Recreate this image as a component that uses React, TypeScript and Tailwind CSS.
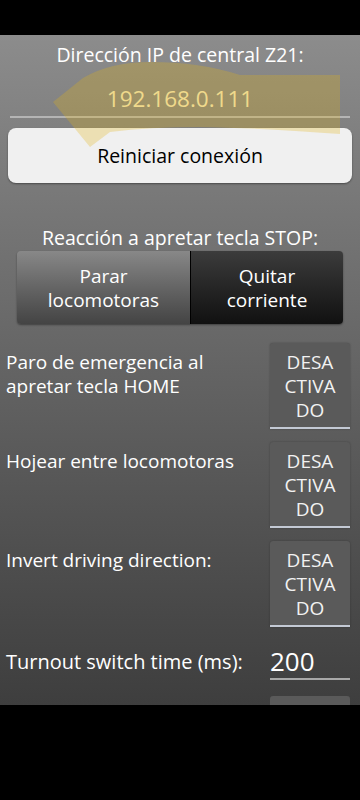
import React from "react";

const font = { fontFamily: '"Open Sans", "Noto Sans", sans-serif' };

function ToggleBox({ text }: { text: string[] }): React.JSX.Element {
  return (
    <div className="flex w-[80px] shrink-0 flex-col items-center rounded-t-[3px] border-b-2 border-[#c3c9d4] bg-[#5a5a5a] pt-[7px] pb-[5px] shadow-[0_0_2px_rgba(0,0,0,0.3)]">
      {text.map((t) => (
        <span key={t} className="text-[19px] leading-[24px] text-[#f2f2f2]">
          {t}
        </span>
      ))}
    </div>
  );
}

function SettingRow({ label }: { label: string[] }): React.JSX.Element {
  return (
    <div className="flex items-start justify-between pl-[6px] pr-[10px]">
      <div className="pt-[7px] text-[19px] leading-[24px] text-white">
        {label.map((l) => (
          <div key={l}>{l}</div>
        ))}
      </div>
      <ToggleBox text={["DESA", "CTIVA", "DO"]} />
    </div>
  );
}

export default function App(): React.JSX.Element {
  return (
    <div className="flex h-[800px] w-[360px] flex-col bg-black" style={font}>
      <div className="h-[35px] shrink-0 bg-black" />

      {/* Settings panel */}
      <div className="relative h-[670px] shrink-0 overflow-hidden bg-gradient-to-b from-[#8c8c8c] to-[#3e3e3e]">
        <div className="pt-[8px] text-center text-[19.5px] leading-[24px] text-white">
          Dirección IP de central Z21:
        </div>
        <div className="mx-[10px] mt-[17px] border-b-2 border-[#b4b4b4] pb-[2px] text-center text-[22.5px] leading-[30px] text-[#f5e8ba]">
          192.168.0.111
        </div>
        <button className="mx-[8px] mt-[10px] flex h-[55px] w-[344px] items-center justify-center rounded-[8px] bg-[#f0f0f0] text-[19.5px] text-black shadow-[0_1px_2px_rgba(0,0,0,0.4)]">
          Reiniciar conexión
        </button>

        <div className="mt-[43px] text-center text-[19.5px] leading-[24px] text-white">
          Reacción a apretar tecla STOP:
        </div>
        <div className="mx-[17px] mt-[1px] flex h-[73px] overflow-hidden rounded-[4px] shadow-[0_1px_2px_rgba(0,0,0,0.4)]">
          <div className="flex w-[173px] flex-col items-center justify-center bg-gradient-to-b from-[#888888] to-[#444444] text-[19px] leading-[24px] text-white">
            <span>Parar</span>
            <span>locomotoras</span>
          </div>
          <div className="w-[1px] bg-black" />
          <div className="flex flex-1 flex-col items-center justify-center bg-gradient-to-b from-[#3c3c3c] to-[#111111] text-[19px] leading-[24px] text-white">
            <span>Quitar</span>
            <span>corriente</span>
          </div>
        </div>

        <div className="mt-[19px] flex flex-col gap-[13px]">
          <SettingRow label={["Paro de emergencia al", "apretar tecla HOME"]} />
          <SettingRow label={["Hojear entre locomotoras"]} />
          <SettingRow label={["Invert driving direction:"]} />
        </div>

        <div className="mt-[17px] flex items-center justify-between pl-[6px] pr-[10px]">
          <span className="text-[20px] text-white">Turnout switch time (ms):</span>
          <div className="w-[80px] border-b-2 border-[#a8a8a8] text-[26px] leading-[34px] text-white">
            200
          </div>
        </div>
        <div className="ml-auto mr-[10px] mt-[16px] h-[30px] w-[80px] rounded-t-[3px] bg-[#5a5a5a]" />

        {/* highlight arrow overlay */}
        <svg
          className="pointer-events-none absolute left-0 top-0"
          width="360"
          height="160"
          viewBox="0 35 360 160"
        >
          <path
            d="M53 102 L83 78 Q110 62 150 62 Q200 62 240 75 L340 75 L340 134 Q260 128 200 127 Q150 127 110 132 L90 147 Z"
            fill="rgba(228,178,20,0.28)"
          />
        </svg>
      </div>

      <div className="flex-1 bg-black" />
    </div>
  );
}
